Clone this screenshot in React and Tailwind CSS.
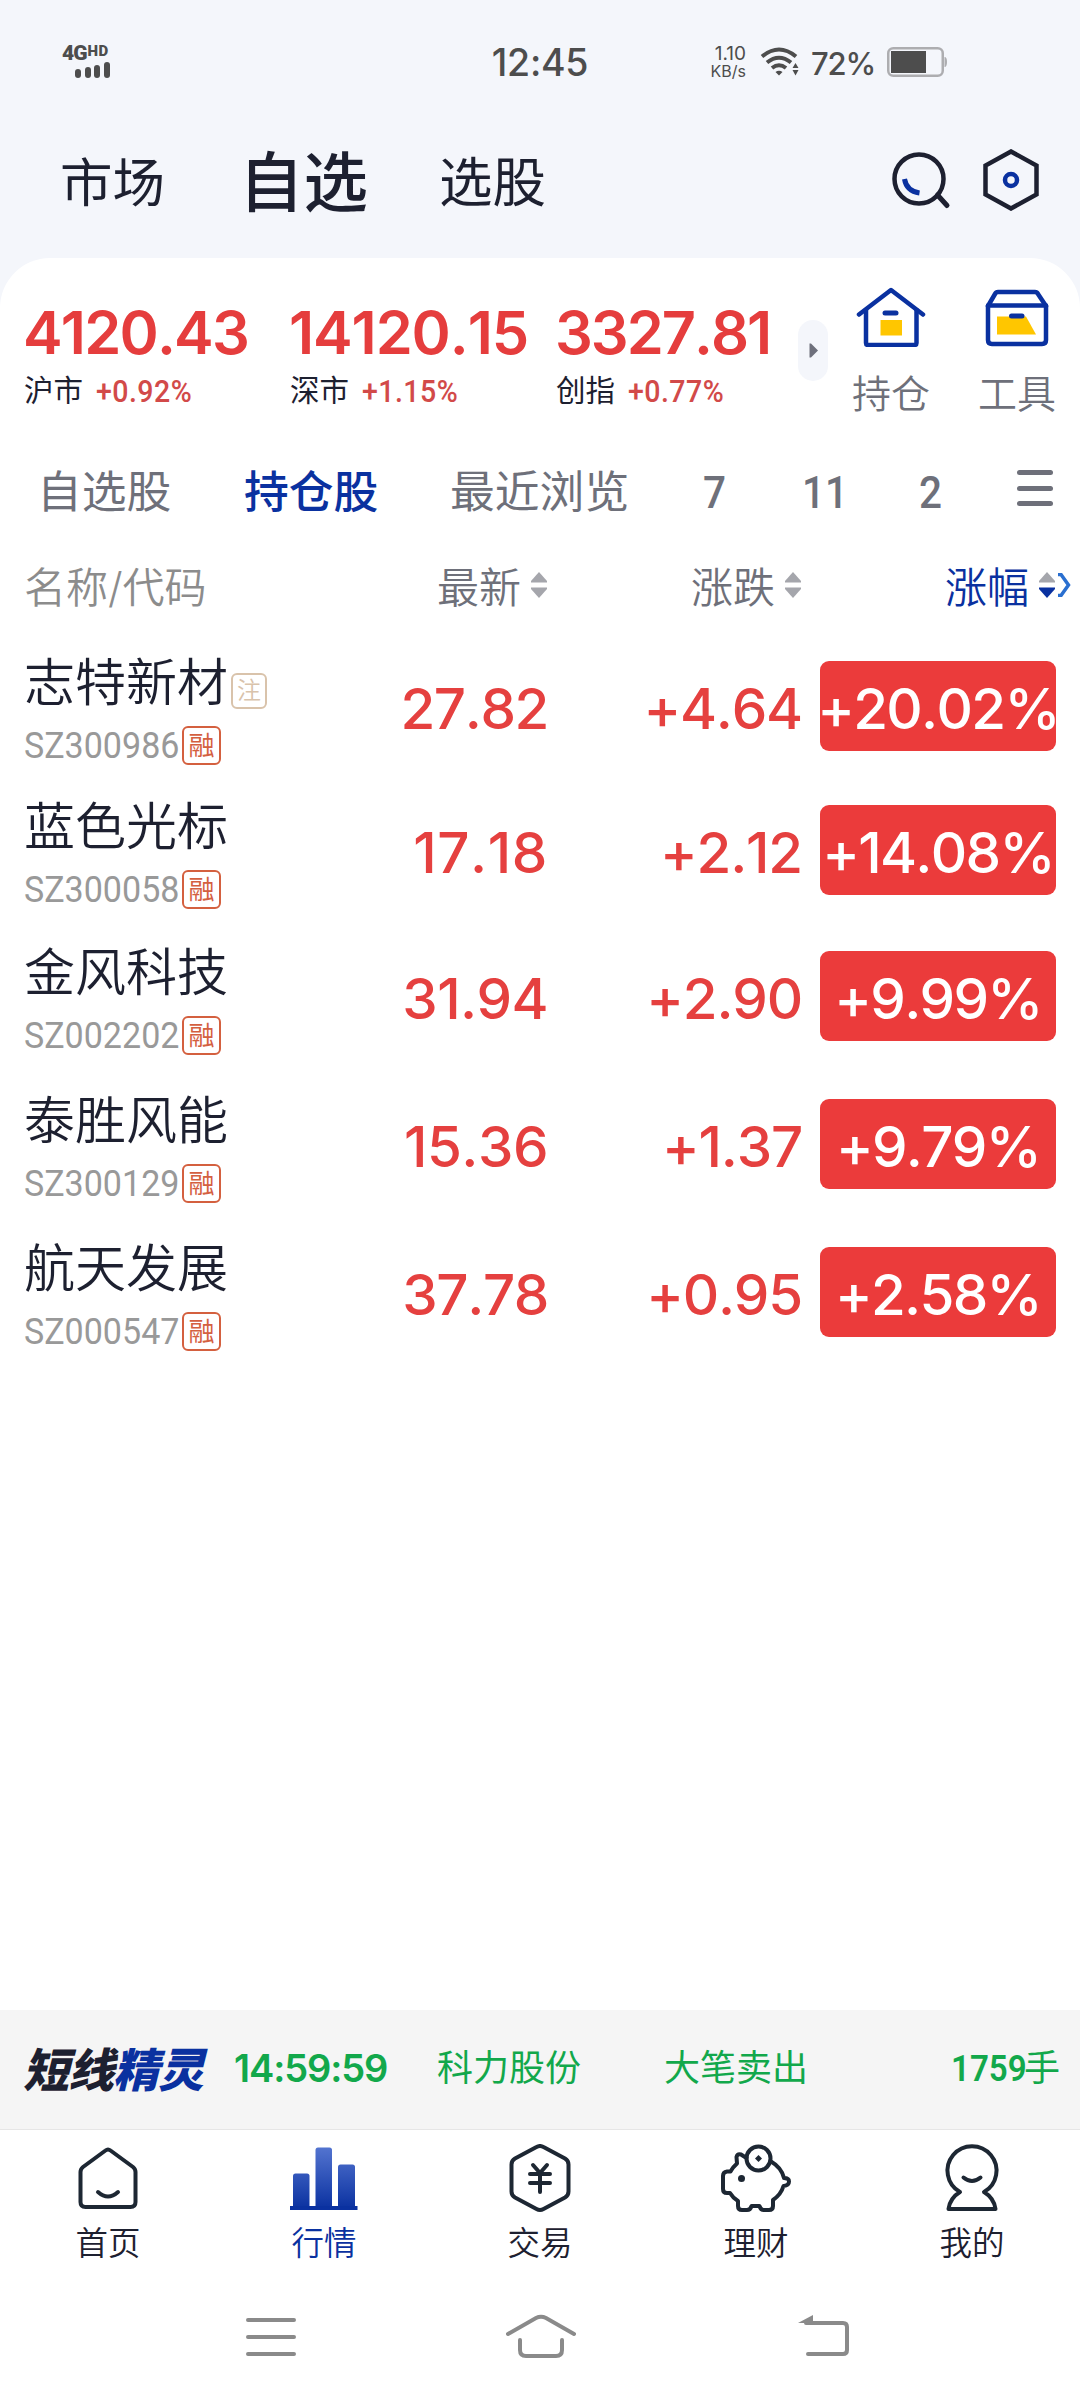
import { useState } from 'react';
import clsx from 'clsx';

const indices = [
  { name: '沪市', value: '4120.43', change: '+0.92%', tracking: 'tracking-[-1.8px]' },
  { name: '深市', value: '14120.15', change: '+1.15%', tracking: 'tracking-[-1.1px]' },
  { name: '创指', value: '3327.81', change: '+0.77%', tracking: 'tracking-[-2px]' },
];

const stocks = [
  { name: '志特新材', code: 'SZ300986', price: '27.82', change: '+4.64', pct: '+20.02%', note: true, height: 'h-[144px]', tracking: 'tracking-[-1.4px]' },
  { name: '蓝色光标', code: 'SZ300058', price: '17.18', change: '+2.12', pct: '+14.08%', height: 'h-[146px]', tracking: 'tracking-[0.6px]' },
  { name: '金风科技', code: 'SZ002202', price: '31.94', change: '+2.90', pct: '+9.99%', height: 'h-[148px]', tracking: 'tracking-[-0.6px]' },
  { name: '泰胜风能', code: 'SZ300129', price: '15.36', change: '+1.37', pct: '+9.79%', height: 'h-[148px]', tracking: 'tracking-[-0.5px]' },
  { name: '航天发展', code: 'SZ000547', price: '37.78', change: '+0.95', pct: '+2.58%', height: 'h-[148px]', tracking: 'tracking-[-1.4px]' },
];

const groups = [
  { label: '自选股', width: 'w-[207px]', cjk: true },
  { label: '持仓股', width: 'w-[206px]', cjk: true },
  { label: '最近浏览', width: 'w-[253px]', cjk: true },
  { label: '7', width: 'w-[99px]' },
  { label: '11', width: 'w-[117px]' },
  { label: '2', width: 'w-[98px]' },
];

// Narrow figures used for codes and small percentages
const Narrow = ({ className, children }) => (
  <span className={clsx('inline-block origin-left scale-x-[0.92] font-[Roboto,sans-serif] leading-none whitespace-nowrap', className)}>
    {children}
  </span>
);

const StatusBar = () => (
  <div className="flex h-[124px] items-center text-[#4d4d4d]">
    <div className="flex h-8 w-[430px] flex-col pl-[62px]">
      <div className="flex h-[15px] items-start font-[Roboto,sans-serif] font-black leading-none">
        <span className="text-[21px] leading-[15px] tracking-[-1px]">4G</span>
        <span className="ml-px text-[15px] leading-[10px] tracking-[0.5px]">HD</span>
      </div>
      <div className="flex h-[17px] items-end gap-[3.5px] pl-[13px]">
        <i className="h-[9px] w-1.5 rounded-sm bg-[#4d4d4d]" />
        <i className="h-[11px] w-1.5 rounded-sm bg-[#4d4d4d]" />
        <i className="h-[13px] w-1.5 rounded-sm bg-[#4d4d4d]" />
        <i className="h-[16px] w-1.5 rounded-sm bg-[#4d4d4d]" />
      </div>
    </div>
    <div className="w-[220px] pt-[2px] text-center text-[37.5px] font-medium leading-none tracking-[-0.3px]">12:45</div>
    <div className="flex w-[96px] flex-col items-end gap-px text-right">
      <span className="text-[19px] leading-[17px]">1.10</span>
      <span className="text-[16px] leading-[16px]">KB/s</span>
    </div>
    <svg className="ml-[14px] h-[30px] w-[40px]" viewBox="0 0 40 30" fill="none" stroke="#4d4d4d" strokeWidth="4">
      <path d="M2 9.500 Q19 -4.500 36 9.500" />
      <path d="M7 15.500 Q19 6 31 15.500" />
      <path d="M12 21 Q19 15.500 26 21" />
      <path d="M15.500 25 Q19 22.500 22.500 25 L19 28.500 Z" fill="#4d4d4d" stroke="none" />
      <path d="M32.500 21 L35.500 16 L38.500 21 Z M32.500 23 L35.500 28.500 L38.500 23 Z" fill="#4d4d4d" stroke="none" />
    </svg>
    <div className="ml-[11px] w-[66px] pt-[2px] text-[31px] font-medium leading-none tracking-[-1.2px]">72%</div>
    <svg className="ml-[10px] h-[30px] w-[60px]" viewBox="0 0 60 30">
      <rect x="1.250" y="1.250" width="54.500" height="27.500" rx="5" fill="none" stroke="#adadb0" strokeWidth="2.500" />
      <rect x="4" y="4" width="35" height="22" fill="#4d4d4d" />
      <path d="M57.500 10 Q60 10 60 15 Q60 20 57.500 20 Z" fill="#adadb0" />
    </svg>
  </div>
);

const TopTabs = () => (
  <div className="flex h-[134px] items-start pl-[60px] text-[#1d2030]">
    <div className="flex h-[118px] w-[179px] items-center text-[52.5px] leading-none">市场</div>
    <div className="flex h-[118px] w-[200px] items-center text-[64.5px] font-medium leading-none">自选</div>
    <div className="flex h-[118px] w-[452px] items-center text-[53.5px] leading-none">选股</div>
    <svg className="mt-[30px] h-[56px] w-[60px] overflow-visible" viewBox="0 0 60 56" fill="none" strokeLinecap="round">
      <circle cx="28" cy="25" r="24.500" stroke="#1d2030" strokeWidth="4.500" />
      <path d="M46.500 41 L56 51.500" stroke="#1d2030" strokeWidth="5" />
      <path d="M13.500 25 Q15.500 37 28.500 39" stroke="#0a31a0" strokeWidth="5" strokeLinecap="butt" />
    </svg>
    <svg className="mt-[25px] ml-[32px] h-[62px] w-[56px]" viewBox="0 0 56 62" fill="none">
      <path d="M28 2.500 L53.500 16.500 V45.500 L28 59.500 L2.500 45.500 V16.500 Z" stroke="#1d2030" strokeWidth="4.500" />
      <circle cx="28" cy="31" r="6" stroke="#0a31a0" strokeWidth="4.500" />
    </svg>
  </div>
);

const IndexBar = () => (
  <div className="flex h-[178px] items-start">
    <div className="flex pl-6">
      {indices.map((item) => (
        <div key={item.name} className="w-[266px] pt-[45px] last:w-[250px]">
          <div className={clsx('-ml-px text-[59.5px] font-semibold leading-[58px] text-[#e53d3d] [font-kerning:none]', item.tracking)}>{item.value}</div>
          <div className="mt-[13px] flex h-[34px] items-center">
            <span className="text-[29.5px] leading-none text-[#1d2030]">{item.name}</span>
            <Narrow className="ml-[13px] text-[31px] font-medium tracking-[0.5px] text-[#d24a49]">{item.change}</Narrow>
          </div>
        </div>
      ))}
    </div>
    <div className="-ml-2 mt-[62px] flex h-[61px] w-[30px] items-center justify-center rounded-full bg-[#f4f6fb]">
      <svg className="h-[15px] w-[9px]" viewBox="0 0 9 15">
        <path d="M0.500 0.500 H2 L9 7.500 L2 14.500 H0.500 Z" fill="#6e707c" />
      </svg>
    </div>
    <div className="ml-[22px] mt-[29px] flex w-[82px] flex-col items-center">
      <svg className="h-[60px] w-[70px]" viewBox="0 0 70 60" fill="none" stroke="#0a31a0" strokeWidth="4.500" strokeLinecap="round" strokeLinejoin="round">
        <path d="M3 27.500 L35 3 L67 27.500" />
        <path d="M10 23 V56 Q10 58 12 58 H58.500 Q60.500 58 60.500 56 V23" />
        <path d="M29 26 H40" strokeWidth="5" />
        <path d="M24.500 33 H46 V48.500 H24.500 Z" fill="#ffc600" stroke="none" />
      </svg>
      <span className="mt-[27px] text-[39px] font-[350] leading-none text-[#6e707a]">持仓</span>
    </div>
    <div className="ml-[44px] mt-[29px] flex w-[82px] flex-col items-center">
      <svg className="h-[60px] w-[64px]" viewBox="0 0 64 60" fill="none" stroke="#0a31a0" strokeWidth="4.500" strokeLinecap="round" strokeLinejoin="round">
        <path d="M3 19 L10 7 Q11 5 13 5 H50 Q52 5 53 7 L61 19" />
        <path d="M3 18.500 H61 V53 Q61 57 57 57 H7 Q3 57 3 53 Z" />
        <path d="M12 29.500 H41 L51 47.500 H12 Z" fill="#ffc600" stroke="none" />
        <path d="M26.500 29 H37" strokeWidth="5" />
      </svg>
      <span className="mt-[27px] text-[39px] font-[350] leading-none text-[#6e707a]">工具</span>
    </div>
  </div>
);

const GroupTabs = () => {
  const [active, setActive] = useState('持仓股');

  return (
    <div className="flex h-[108px] items-center pt-[4px] pl-[37px] text-[#6e707a]">
      {groups.map((g) => (
        <button
          key={g.label}
          onClick={() => setActive(g.label)}
          className={clsx(
            'shrink-0 text-left leading-none',
            g.width,
            g.cjk ? 'text-[44.8px]' : 'text-[44px]',
            active === g.label && 'font-medium text-[#0a31a0]'
          )}
        >
          {g.cjk ? g.label : <Narrow className="font-medium">{g.label}</Narrow>}
        </button>
      ))}
      <div className="mb-[8px] flex h-[36px] w-[36px] shrink-0 flex-col justify-between">
        <i className="h-[5px] rounded-full bg-[#6e707a]" />
        <i className="h-[5px] rounded-full bg-[#6e707a]" />
        <i className="h-[5px] rounded-full bg-[#6e707a]" />
      </div>
    </div>
  );
};

const SortIcon = ({ down }) => (
  <svg className="-mt-1.5 ml-[10px] h-[26px] w-4" viewBox="0 0 16 26">
    <path d="M8 0 L16 9 V10.500 H0 V9 Z" fill="#a5a6ac" />
    <path d="M8 26 L16 17 V15.500 H0 V17 Z" fill={down ? '#0a31a0' : '#a5a6ac'} />
  </svg>
);

const TableHead = () => (
  <div className="flex h-[84px] items-center pt-[3px] pl-6 text-[42px] font-[350] leading-none text-[#6e707a]">
    <div className="w-[413px] text-[#8c8c8c]">名称/代码</div>
    <div className="flex w-[254px] items-center">最新<SortIcon /></div>
    <div className="flex w-[254px] items-center">涨跌<SortIcon /></div>
    <div className="flex items-center text-[#0a31a0]">涨幅<SortIcon down /></div>
    <svg className="-mt-1.5 ml-px h-[24px] w-[15px]" viewBox="0 0 15 24" fill="none">
      <path d="M2 1.500 L5 1.500 L12.500 12 L5 22.500 H2" stroke="#2a6fd0" strokeWidth="3.500" />
    </svg>
  </div>
);

const StockRow = ({ stock }) => (
  <div className={clsx('flex items-start pl-6', stock.height)}>
    <div className="w-[366px]">
      <div className="-mt-px flex h-[56px] items-center">
        <span className="text-[51px] font-[350] leading-none text-[#1d2030]">{stock.name}</span>
        {stock.note && (
          <span className="mt-[17px] ml-[3px] flex size-[36px] items-center justify-center rounded-md border-2 border-[#d9c3ab] text-[24px] font-[350] leading-none text-[#d9c3ab]">注</span>
        )}
      </div>
      <div className="mt-[16px] flex h-[39px] items-center">
        <span className="w-[158px]">
          <Narrow className="-mt-px text-[37px] text-[#999]">{stock.code}</Narrow>
        </span>
        <span className="flex size-[39px] items-center justify-center rounded-md border-2 border-[#d4603f] text-[26px] leading-none text-[#d4603f]">融</span>
      </div>
    </div>
    <div className={clsx('mt-1.5 flex h-[90px] w-[158px] items-center justify-end pt-[7px] text-[56.5px] font-medium leading-none text-[#e5403f] [font-kerning:none]', stock.tracking)}>{stock.price}</div>
    <div className="mt-1.5 flex h-[90px] w-[254px] items-center justify-end pt-[7px] text-[56.5px] font-medium leading-none tracking-[-1.2px] text-[#e5403f] [font-kerning:none]">{stock.change}</div>
    <div className="mt-1.5 ml-[18px] flex h-[90px] w-[236px] items-center justify-center rounded-[9px] bg-[#eb3b3b] pt-[7px] text-[56.5px] font-medium leading-none tracking-[-1.7px] whitespace-nowrap text-white [font-kerning:none]">{stock.pct}</div>
  </div>
);

const Ticker = () => (
  <div className="flex h-[120px] items-center border-b border-[#e6e6e6] bg-[#f5f5f5] pb-[3px] pl-6 text-[36px] leading-none text-[#12a84b]">
    <div className="-ml-px w-[211px] pt-[4px] text-[46px] font-black italic tracking-[-1px] text-[#1d2030]">
      短线<span className="text-[#0a31a0]">精灵</span>
    </div>
    <div className="w-[203px] text-[38px] font-semibold tracking-[-1.1px]">14:59:59</div>
    <div className="w-[227px]">科力股份</div>
    <div className="w-[287px]">大笔卖出</div>
    <div className="flex items-center">
      <span className="w-[73px]"><Narrow className="font-semibold">1759</Narrow></span>手
    </div>
  </div>
);

const HomeIcon = () => (
  <>
    <path d="M37.500 6.500 Q40 4.500 42.500 6.500 L65 23 Q67.500 25 67.500 28 V58 Q67.500 63 62.500 63 H17.500 Q12.500 63 12.500 58 V28 Q12.500 25 15 23 Z" />
    <path d="M30 48 Q40 57 50 48" />
  </>
);

const MarketIcon = () => (
  <g stroke="none">
    <defs>
      <linearGradient id="bars" gradientUnits="userSpaceOnUse" x1="0" y1="4" x2="0" y2="65">
        <stop offset="0" stopColor="#5273cf" />
        <stop offset="1" stopColor="#0a31a0" />
      </linearGradient>
    </defs>
    <path d="M9 64 V32 Q9 29.500 11.500 29.500 H23 Q25.500 29.500 25.500 32 V64 Z" fill="url(#bars)" />
    <path d="M31.500 64 V6 Q31.500 3.500 34 3.500 H45.500 Q48 3.500 48 6 V64 Z" fill="url(#bars)" />
    <path d="M54 64 V23 Q54 20.500 56.500 20.500 H68.500 Q71 20.500 71 23 V64 Z" fill="url(#bars)" />
    <path d="M6 62 H73.500 V66 H6 Z" fill="#0a31a0" />
  </g>
);

const TradeIcon = () => (
  <>
    <path d="M36.500 3 Q40 1 43.500 3 L65 14.500 Q68.500 16.500 68.500 20.500 V47.500 Q68.500 51.500 65 53.500 L43.500 65 Q40 67 36.500 65 L15 53.500 Q11.500 51.500 11.500 47.500 V20.500 Q11.500 16.500 15 14.500 Z" />
    <path d="M33 21 L40 29 L47 21 M30 30 H50 M30 39 H50 M40 30 V48" />
  </>
);

const WealthIcon = () => (
  <>
    <circle cx="42.500" cy="14.500" r="12" />
    <path d="M42.500 11 L46 14.500 L42.500 18 L39 14.500 Z" fill="#1d2733" stroke="none" />
    <path d="M30.500 14 L25 10.500 Q21.500 9.500 20.500 13 L21 19.500 Q17 23 14.500 27.500 H11 Q7 28 7 32 V45 Q7 49 11 49 H14 Q17 54 22 57 V62 Q22 66 26 66 H31 Q34.500 66 35.500 62 H43.500 Q44.500 66 48 66 H53 Q57 66 57 62 V56 Q65 50.500 67.500 42 Q73 41.500 73 37.500 Q73 34 68 34 Q65.500 23.500 55 17.500" />
    <circle cx="25.500" cy="34.500" r="3.500" fill="#1d2733" stroke="none" />
  </>
);

const MineIcon = () => (
  <>
    <path d="M28 48 A24.500 24.500 0 1 1 52 48 Q62 54 63.500 65 H16.500 Q18 54 28 48 Z" />
    <path d="M31.500 33.500 Q40 40.500 48.500 33.500" />
  </>
);

const navItems = [
  { label: '首页', icon: HomeIcon },
  { label: '行情', icon: MarketIcon, active: true },
  { label: '交易', icon: TradeIcon },
  { label: '理财', icon: WealthIcon },
  { label: '我的', icon: MineIcon },
];

const BottomNav = () => (
  <div className="grid h-[150px] grid-cols-5 pt-[14px]">
    {navItems.map(({ label, icon: Icon, active }) => (
      <div key={label} className={clsx('flex flex-col items-center', active ? 'text-[#0a31a0]' : 'text-[#1d2030]')}>
        <svg className="h-[70px] w-20" viewBox="0 0 80 70" fill="none" stroke="#1d2733" strokeWidth="4" strokeLinecap="round" strokeLinejoin="round">
          <Icon />
        </svg>
        <span className="mt-[14px] text-[32.500px] font-[350] leading-none">{label}</span>
      </div>
    ))}
  </div>
);

const SystemNav = () => (
  <div className="flex h-[120px] items-start pt-[34px] pl-[246px]">
    <svg className="h-[44px] w-[50px]" viewBox="0 0 50 44" stroke="#8a8a8a" strokeWidth="4" strokeLinecap="round">
      <path d="M2 6 H48 M2 23 H48 M2 40 H48" />
    </svg>
    <svg className="ml-[210px] h-[44px] w-[70px]" viewBox="0 0 70 44" fill="none" stroke="#8a8a8a" strokeWidth="4" strokeLinecap="round">
      <path d="M2 20 L30 4 Q35 1.500 40 4 L68 20" />
      <path d="M14 26 V36 Q14 42 20 42 H50 Q56 42 56 36 V26" />
    </svg>
    <svg className="ml-[222px] h-[44px] w-[52px]" viewBox="0 0 52 44" fill="none" stroke="#8a8a8a" strokeWidth="4" strokeLinecap="round">
      <path d="M8 9 H45 Q49 9 49 13 V36 Q49 40 45 40 H10" />
      <path d="M0 9 L15 1 V9 Z" fill="#8a8a8a" stroke="none" />
    </svg>
  </div>
);

const App = () => (
  <div className="flex h-[2400px] w-[1080px] flex-col overflow-hidden bg-[#f4f6fb] font-[Inter,'Noto_Sans_CJK_SC',sans-serif]">
    <StatusBar />
    <TopTabs />
    <div className="flex flex-1 flex-col rounded-t-[50px] bg-white">
      <IndexBar />
      <GroupTabs />
      <TableHead />
      <div className="mt-[27px] flex-1">
        {stocks.map((s) => (
          <StockRow key={s.code} stock={s} />
        ))}
      </div>
      <Ticker />
      <BottomNav />
      <SystemNav />
    </div>
  </div>
);

export default App;
